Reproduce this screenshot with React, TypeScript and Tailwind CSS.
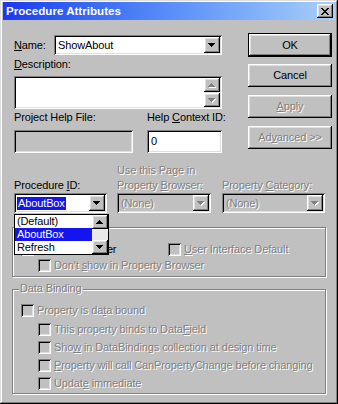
import React from "react";

const FONT = "font-['Liberation_Sans',Arial,sans-serif]";
const DIS = "text-[#808080] [text-shadow:1px_1px_0_#ffffff]";
const SUNKEN =
  "shadow-[inset_1px_1px_0_#808080,inset_-1px_-1px_0_#ffffff,inset_2px_2px_0_#000000,inset_-2px_-2px_0_#dfdfdf]";
const RAISED =
  "shadow-[inset_-1px_-1px_0_#000000,inset_1px_1px_0_#ffffff,inset_-2px_-2px_0_#808080,inset_2px_2px_0_#dfdfdf]";
const GROUP =
  "relative border border-[#808080] shadow-[1px_1px_0_#ffffff,inset_1px_1px_0_#ffffff]";

function U({ c }: { c: string }) {
  return <span className="underline decoration-1 underline-offset-[1px]">{c}</span>;
}

function Arrow({ up = false, disabled = false }: { up?: boolean; disabled?: boolean }) {
  const rows = up
    ? [
        [3, 0, 1],
        [2, 1, 3],
        [1, 2, 5],
        [0, 3, 7],
      ]
    : [
        [0, 0, 7],
        [1, 1, 5],
        [2, 2, 3],
        [3, 3, 1],
      ];
  return (
    <svg width={8} height={5} shapeRendering="crispEdges" className="block">
      {disabled &&
        rows.map(([x, y, w], i) => (
          <rect key={"s" + i} x={x + 1} y={y + 1} width={w} height={1} fill="#ffffff" />
        ))}
      {rows.map(([x, y, w], i) => (
        <rect key={i} x={x} y={y} width={w} height={1} fill={disabled ? "#808080" : "#000000"} />
      ))}
    </svg>
  );
}

function CloseX() {
  const px = [
    [0, 0, 2], [6, 0, 2],
    [1, 1, 2], [5, 1, 2],
    [2, 2, 4],
    [3, 3, 2],
    [2, 4, 4],
    [1, 5, 2], [5, 5, 2],
    [0, 6, 2], [6, 6, 2],
  ];
  return (
    <svg width={8} height={7} shapeRendering="crispEdges" className="block">
      {px.map(([x, y, w], i) => (
        <rect key={i} x={x} y={y} width={w} height={1} fill="#000" />
      ))}
    </svg>
  );
}

function ArrowBtn({ up = false, disabled = false, h = "h-[16px]" }: { up?: boolean; disabled?: boolean; h?: string }) {
  return (
    <div className={`w-[16px] ${h} bg-[#c0c0c0] ${RAISED} flex items-center justify-center`}>
      <Arrow up={up} disabled={disabled} />
    </div>
  );
}

function Combo({
  w,
  text,
  disabled = false,
  selected = false,
}: {
  w: string;
  text: string;
  disabled?: boolean;
  selected?: boolean;
}) {
  return (
    <div className={`${w} h-[20px] p-[2px] flex ${SUNKEN} ${disabled ? "bg-[#c0c0c0]" : "bg-white"}`}>
      <div className="flex-1 flex items-center pl-[1px] min-w-0">
        {selected ? (
          <span className="bg-[#1414f0] text-white px-[1px] h-[13px] leading-[13px]">{text}</span>
        ) : (
          <span className={`pl-[1px] ${disabled ? DIS : "text-black"}`}>{text}</span>
        )}
      </div>
      <ArrowBtn disabled={disabled} />
    </div>
  );
}

function Check({ disabled = true }: { disabled?: boolean }) {
  return <div className={`w-[13px] h-[13px] shrink-0 ${SUNKEN} ${disabled ? "bg-[#c0c0c0]" : "bg-white"}`} />;
}

function CheckRow({
  children,
  disabled = true,
  className = "",
  textClass = "",
}: {
  children: React.ReactNode;
  disabled?: boolean;
  className?: string;
  textClass?: string;
}) {
  return (
    <div className={`flex items-center gap-[3px] h-[13px] ${className}`}>
      <Check disabled={disabled} />
      <span className={`leading-[13px] whitespace-nowrap ${disabled ? DIS : "text-black"} ${textClass}`}>
        {children}
      </span>
    </div>
  );
}

function Button({
  children,
  def = false,
  disabled = false,
  className = "",
}: {
  children: React.ReactNode;
  def?: boolean;
  disabled?: boolean;
  className?: string;
}) {
  const inner = (
    <div
      className={`w-full h-full flex items-center justify-center bg-[#c0c0c0] ${RAISED} ${
        disabled ? DIS : "text-black"
      }`}
    >
      {children}
    </div>
  );
  if (def) {
    return <div className={`w-[84px] h-[24px] border border-black ${className}`}>{inner}</div>;
  }
  return <div className={`w-[84px] h-[23px] ${className}`}>{inner}</div>;
}

export default function App() {
  return (
    <div
      className={`${FONT} text-[11px] leading-[13px] tracking-[-0.12px] w-[338px] h-[404px] bg-[#c0c0c0] pt-[2px] px-[3px] pb-[3px] flex flex-col shadow-[inset_-1px_-1px_0_#000000,inset_1px_1px_0_#dfdfdf,inset_-2px_-2px_0_#808080,inset_2px_2px_0_#ffffff] overflow-hidden select-none`}
    >
      {/* Title bar */}
      <div className="h-[18px] shrink-0 flex items-center justify-between pl-[3px] pr-[2px] bg-gradient-to-r from-[#2036f0] to-[#a8d0f8]">
        <span className="text-white font-bold text-[11.6px] tracking-normal leading-[18px]">Procedure Attributes</span>
        <div className={`w-[16px] h-[14px] bg-[#c0c0c0] ${RAISED} flex items-center justify-center`}>
          <CloseX />
        </div>
      </div>

      {/* Body */}
      <div className="flex-1 pl-[11px] flex flex-col">
        {/* Upper section */}
        <div className="flex">
          <div className="w-[208px] mt-[15px]">
            <div className="flex items-center h-[20px]">
              <span className="w-[40px]">
                <U c="N" />ame:
              </span>
              <Combo w="w-[168px]" text="ShowAbout" />
            </div>
            <div className="mt-[3px] h-[13px]">
              <U c="D" />escription:
            </div>
            <div className={`mt-[5px] h-[33px] p-[2px] flex bg-white ${SUNKEN}`}>
              <div className="flex-1" />
              <div className="w-[16px] flex flex-col justify-between bg-[#e4e4e4]">
                <ArrowBtn up disabled h="h-[14px]" />
                <ArrowBtn disabled h="h-[14px]" />
              </div>
            </div>
            <div className="mt-[2px] h-[13px] flex whitespace-nowrap">
              <span className="w-[133px] shrink-0">Project Help File:</span>
              <span className="whitespace-nowrap">
                Help <U c="C" />ontext ID:
              </span>
            </div>
            <div className="mt-[6px] flex">
              <div className={`w-[119px] h-[23px] bg-[#c0c0c0] ${SUNKEN}`} />
              <div className={`ml-[14px] w-[75px] h-[23px] bg-white ${SUNKEN} flex items-center pl-[4px]`}>0</div>
            </div>
          </div>
          <div className="ml-[26px] mt-[13px] flex flex-col">
            <Button def>OK</Button>
            <Button className="mt-[7px]">Cancel</Button>
            <Button disabled className="mt-[8px]">
              <span>
                <U c="A" />pply
              </span>
            </Button>
            <Button disabled className="mt-[8px]">
              <span>
                Ad<U c="v" />anced &gt;&gt;
              </span>
            </Button>
          </div>
        </div>

        {/* Lower row of combos */}
        <div className="mt-[11px] flex items-end">
          <div className="w-[93px] flex flex-col">
            <div className="h-[13px] whitespace-nowrap">
              Procedure <U c="I" />D:
            </div>
            <div className="relative mt-[1px]">
              <Combo w="w-[93px]" text="AboutBox" selected />
              {/* Dropped-down list */}
              <div className="absolute left-0 top-[21px] z-10 w-[95px] h-[41px] border border-black bg-white flex">
                <div className="flex-1 flex flex-col">
                  <div className="h-[13px] leading-[13px] pl-[2px]">(Default)</div>
                  <div className="h-[13px] leading-[13px] pl-[2px] bg-[#1414f0] text-white">AboutBox</div>
                  <div className="h-[13px] leading-[13px] pl-[2px]">Refresh</div>
                </div>
                <div className="w-[16px] flex flex-col bg-[#e8e8e8]">
                  <ArrowBtn up h="h-[14px]" />
                  <div className="flex-1" />
                  <ArrowBtn h="h-[14px]" />
                </div>
              </div>
            </div>
          </div>
          <div className="ml-[10px] w-[94px] flex flex-col">
            <div className={`h-[13px] whitespace-nowrap ${DIS}`}>Use this Page in</div>
            <div className={`mt-[2px] h-[13px] whitespace-nowrap ${DIS}`}>
              Property <U c="B" />rowser:
            </div>
            <div className="mt-[1px]">
              <Combo w="w-[94px]" text="(None)" disabled />
            </div>
          </div>
          <div className="ml-[11px] w-[103px] flex flex-col">
            <div className={`h-[13px] whitespace-nowrap ${DIS}`}>
              Property <U c="C" />ategory:
            </div>
            <div className="mt-[1px]">
              <Combo w="w-[103px]" text="(None)" disabled />
            </div>
          </div>
        </div>

        {/* Attributes group */}
        <div className={`-ml-[2px] mt-[14px] w-[314px] h-[50px] ${GROUP} pt-[15px] pl-[8px]`}>
          <div className="absolute -top-[8px] left-[6px] px-[1px] bg-[#c0c0c0] h-[13px]">Attributes</div>
          <div className="flex">
            <CheckRow disabled={false} className="w-[147px]" textClass="tracking-[-0.45px]">
              <U c="H" />ide this member
            </CheckRow>
            <CheckRow>
              <U c="U" />ser Interface Default
            </CheckRow>
          </div>
          <CheckRow className="mt-[3px] ml-[17px]">
            Don't <U c="s" />how in Property Browser
          </CheckRow>
        </div>

        {/* Data Binding group */}
        <div className={`-ml-[2px] mt-[12px] w-[314px] h-[105px] ${GROUP} pt-[14px] pl-[8px]`}>
          <div className={`absolute -top-[8px] left-[6px] px-[1px] bg-[#c0c0c0] h-[13px] ${DIS}`}>Data Binding</div>
          <CheckRow>
            Property is da<U c="t" />a bound
          </CheckRow>
          <CheckRow className="mt-[6px] ml-[17px]">
            This property binds to Data<U c="F" />ield
          </CheckRow>
          <CheckRow className="mt-[5px] ml-[17px]">
            Sho<U c="w" /> in DataBindings collection at design time
          </CheckRow>
          <CheckRow className="mt-[5px] ml-[17px]">
            <U c="P" />roperty will call CanPropertyChange before changing
          </CheckRow>
          <CheckRow className="mt-[5px] ml-[17px]">
            Updat<U c="e" /> immediate
          </CheckRow>
        </div>
      </div>
    </div>
  );
}
